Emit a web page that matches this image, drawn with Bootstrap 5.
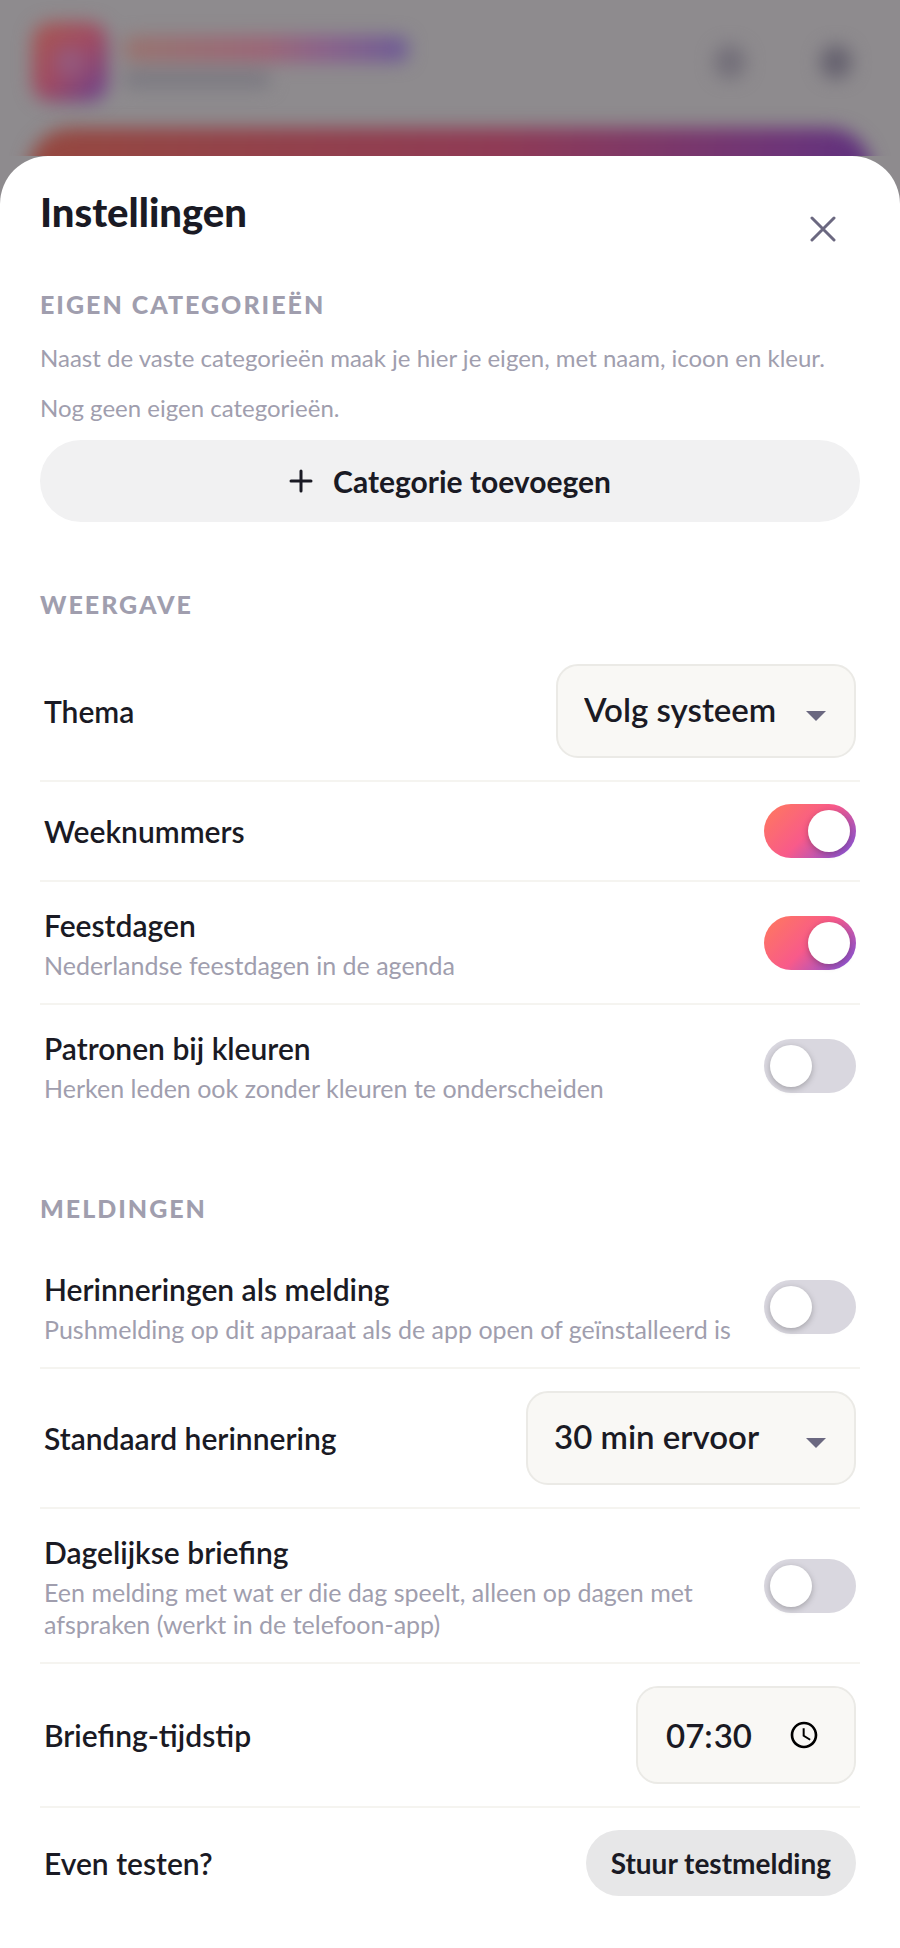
<!DOCTYPE html>
<html lang="nl">
<head>
<meta charset="utf-8">
<meta name="viewport" content="width=device-width, initial-scale=1">
<title>Instellingen</title>
<link href="https://cdn.jsdelivr.net/npm/bootstrap@5.3.0/dist/css/bootstrap.min.css" rel="stylesheet">
<style>
:root{--ink:#1a1a24;--muted:#a09eae;--slate:#6b6880;--line:#f5f4f0;--brand:linear-gradient(135deg,#ff7a5c 0%,#f85a8a 50%,#7a52e0 100%)}
body{font-family:"Lato","Open Sans",sans-serif;color:var(--ink);background:#8e8b8e;overflow-x:hidden}
/* dimmed app behind the sheet */
.backdrop-app{height:156px;overflow:hidden}
.app-bar{height:128px;padding:0 32px 4px;filter:blur(9px)}
.app-logo{width:76px;height:80px;border-radius:20px;background:linear-gradient(135deg,#a85850,#a04a62 50%,#654092)}
.app-logo span{width:28px;height:28px;border-radius:8px;background:#95597c}
.app-name{width:284px;height:26px;border-radius:8px;background:linear-gradient(90deg,#98736f,#9c6476 50%,#8b5f8a 70%,#6c5a96)}
.app-sub{width:146px;height:18px;border-radius:6px;background:#7b7981}
.app-actions{gap:74px}
.app-dot{width:32px;height:34px;border-radius:50%;background:#736f79}
.app-dot.filled{background:#66626f}
.hero-band{height:120px;margin:0 28px;border-radius:44px;filter:blur(9px);background:linear-gradient(100deg,#96483f,#8f3a55 55%,#6d3478 88%,#5c3080)}
/* sheet */
.sheet{background:#fff;border-radius:48px 48px 0 0;padding:32px 40px 30px}
.sheet-title{font-size:40px;line-height:48px;font-weight:900}
.close-btn{width:74px;height:74px;padding:0;border:0;margin-top:4px}
.group-first{margin-top:22px}
.group-block{margin-top:66px}
.group-title{font-size:25px;line-height:32px;font-weight:900;letter-spacing:2px;color:var(--muted);text-transform:uppercase;margin:0 0 22px}
.hint{font-size:24px;line-height:32px;color:var(--muted);margin-bottom:16px}
.hint.intro{margin-bottom:18px}
.pill{background:#f1f1f2;color:var(--ink);border:0;border-radius:50px;font-weight:700;font-size:30px}
.pill:hover{background:#e7e7e8}
.pill-wide{height:82px;gap:20px}
.pill-small{background:#e7e7e8;font-size:28px;height:66px;padding:0 25px}
/* rows */
.setting{padding:22px 4px;border-bottom:2px solid var(--line);gap:24px}
.setting:last-child{border-bottom:0}
.setting-name{font-size:30px;line-height:42px;font-weight:600}
.setting .hint{font-size:25px;margin:3px 0 0}
.field{background-color:#f9f8f5;border:2px solid #ebeae6;border-radius:22px;color:var(--ink);font-size:33px;font-weight:600;line-height:44px}
.field-select{height:94px;padding:0 66px 4px 26px;width:300px;background-image:url("data:image/svg+xml,%3Csvg xmlns='http://www.w3.org/2000/svg' viewBox='0 0 20 10'%3E%3Cpath fill='%236b6880' d='M0 0h20L10 10z'/%3E%3C/svg%3E");background-size:20px 10px;background-position:right 28px top 45px}
.field-select.wide{width:330px}
.field-time{width:220px;height:98px;padding:0 34px 0 28px}
.field-time::-webkit-datetime-edit-ampm-field{display:none}
.field-time::-webkit-calendar-picker-indicator{width:32px;height:32px;padding:0;margin:0;background-size:32px}
.toggle{width:92px;height:54px;margin:0;border:0;border-radius:27px;background:#d9d7df;appearance:none;flex:none;cursor:pointer;padding:6px;display:flex}
.toggle::before{content:"";width:42px;height:42px;border-radius:50%;background:#fff;box-shadow:0 2px 6px rgba(0,0,0,.25)}
.toggle:checked{background:var(--brand);justify-content:flex-end}
</style>
</head>
<body class="d-flex flex-column min-vh-100">
<div class="backdrop-app flex-shrink-0" aria-hidden="true">
  <div class="app-bar d-flex align-items-center">
    <div class="app-logo d-flex align-items-center justify-content-center"><span></span></div>
    <div class="d-flex flex-column gap-2 ms-3"><div class="app-name"></div><div class="app-sub"></div></div>
    <div class="app-actions d-flex ms-auto me-3"><div class="app-dot"></div><div class="app-dot filled"></div></div>
  </div>
  <div class="hero-band"></div>
</div>
<main class="sheet flex-grow-1" role="dialog" aria-labelledby="sheet-title">
  <header class="d-flex justify-content-between align-items-start">
    <h1 class="sheet-title m-0" id="sheet-title">Instellingen</h1>
    <button type="button" class="btn close-btn d-flex align-items-center justify-content-center" aria-label="Sluiten">
      <svg width="26" height="26" viewBox="0 0 26 26" fill="none" stroke="#6b6880" stroke-width="3" stroke-linecap="round"><path d="M2 2l22 22M24 2L2 24"/></svg>
    </button>
  </header>
  <section class="group-first">
    <h2 class="group-title">Eigen categorieën</h2>
    <p class="hint intro">Naast de vaste categorieën maak je hier je eigen, met naam, icoon en kleur.</p>
    <p class="hint">Nog geen eigen categorieën.</p>
    <button type="button" class="btn pill pill-wide w-100 d-flex align-items-center justify-content-center">
      <svg width="24" height="24" viewBox="0 0 24 24" fill="none" stroke="currentColor" stroke-width="3" stroke-linecap="round"><path d="M12 2v20M2 12h20"/></svg>
      Categorie toevoegen
    </button>
  </section>
  <section class="group-block">
    <h2 class="group-title">Weergave</h2>
    <div class="setting d-flex align-items-center justify-content-between">
      <label class="setting-name" for="theme">Thema</label>
      <select class="form-select field field-select" id="theme"><option>Volg systeem</option><option>Licht</option><option>Donker</option></select>
    </div>
    <div class="setting d-flex align-items-center justify-content-between">
      <label class="setting-name" for="weeks">Weeknummers</label>
      <input class="toggle" type="checkbox" role="switch" id="weeks" checked>
    </div>
    <div class="setting d-flex align-items-center justify-content-between">
      <label for="holidays"><span class="setting-name d-block">Feestdagen</span><span class="hint d-block">Nederlandse feestdagen in de agenda</span></label>
      <input class="toggle" type="checkbox" role="switch" id="holidays" checked>
    </div>
    <div class="setting d-flex align-items-center justify-content-between">
      <label for="patterns"><span class="setting-name d-block">Patronen bij kleuren</span><span class="hint d-block">Herken leden ook zonder kleuren te onderscheiden</span></label>
      <input class="toggle" type="checkbox" role="switch" id="patterns">
    </div>
  </section>
  <section class="group-block">
    <h2 class="group-title">Meldingen</h2>
    <div class="setting d-flex align-items-center justify-content-between">
      <label for="push"><span class="setting-name d-block">Herinneringen als melding</span><span class="hint d-block">Pushmelding op dit apparaat als de app open of geïnstalleerd is</span></label>
      <input class="toggle" type="checkbox" role="switch" id="push">
    </div>
    <div class="setting d-flex align-items-center justify-content-between">
      <label class="setting-name" for="reminder">Standaard herinnering</label>
      <select class="form-select field field-select wide" id="reminder"><option>30 min ervoor</option><option>1 uur ervoor</option></select>
    </div>
    <div class="setting d-flex align-items-center justify-content-between">
      <label for="daily"><span class="setting-name d-block">Dagelijkse briefing</span><span class="hint d-block">Een melding met wat er die dag speelt, alleen op dagen met afspraken (werkt in de telefoon-app)</span></label>
      <input class="toggle" type="checkbox" role="switch" id="daily">
    </div>
    <div class="setting d-flex align-items-center justify-content-between">
      <label class="setting-name" for="time">Briefing-tijdstip</label>
      <input class="form-control field field-time" type="time" id="time" value="07:30">
    </div>
    <div class="setting d-flex align-items-center justify-content-between">
      <span class="setting-name">Even testen?</span>
      <button type="button" class="btn pill pill-small">Stuur testmelding</button>
    </div>
  </section>
</main>
<script src="https://cdn.jsdelivr.net/npm/bootstrap@5.3.0/dist/js/bootstrap.bundle.min.js"></script>
</body>
</html>
